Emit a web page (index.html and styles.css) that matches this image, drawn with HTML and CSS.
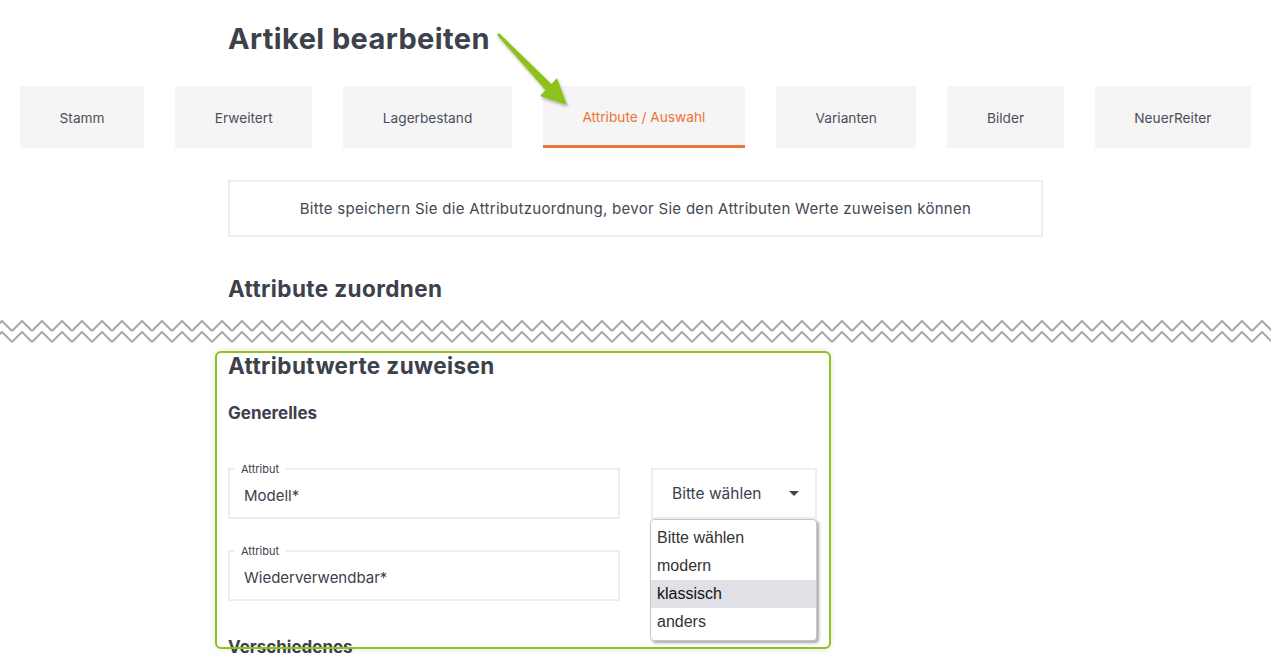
FILE: index.html
```html
<!DOCTYPE html>
<html lang="de">
<head>
  <meta charset="UTF-8" />
  <title>Artikel bearbeiten</title>
  <link rel="stylesheet" href="styles.css">
</head>
<body>
  <h1 class="page-title">Artikel bearbeiten</h1>

  <nav class="tabs">
    <div class="tab">Stamm</div>
    <div class="tab">Erweitert</div>
    <div class="tab">Lagerbestand</div>
    <div class="tab active">Attribute / Auswahl</div>
    <div class="tab">Varianten</div>
    <div class="tab">Bilder</div>
    <div class="tab">NeuerReiter</div>
  </nav>

  <div class="content">
    <div class="notice">Bitte speichern Sie die Attributzuordnung, bevor Sie den Attributen Werte zuweisen können</div>
    <h2 class="section-title">Attribute zuordnen</h2>
  </div>

  <svg class="cut" width="1271" height="26">
    <defs>
      <pattern id="zig" x="-8" y="0" width="20" height="26" patternUnits="userSpaceOnUse">
        <path d="M0 14 L10 4 L20 14 M0 25 L10 15 L20 25" fill="none" stroke="#a9a9a9" stroke-width="2"/>
      </pattern>
    </defs>
    <rect width="1271" height="26" fill="url(#zig)"/>
  </svg>

  <div class="content">
    <h2 class="section-title first">Attributwerte zuweisen</h2>
    <h3 class="group-title">Generelles</h3>

    <div class="attr-row">
      <fieldset class="attr-field">
        <legend>Attribut</legend>
        <div class="attr-value">Modell*</div>
      </fieldset>
      <div class="select-wrap">
        <div class="select-box">Bitte wählen <span class="caret"></span></div>
        <ul class="select-list">
          <li>Bitte wählen</li>
          <li>modern</li>
          <li class="hover">klassisch</li>
          <li>anders</li>
        </ul>
      </div>
    </div>

    <div class="attr-row">
      <fieldset class="attr-field">
        <legend>Attribut</legend>
        <div class="attr-value">Wiederverwendbar*</div>
      </fieldset>
    </div>

    <h3 class="group-title lower">Verschiedenes</h3>
  </div>

  <!-- annotation overlays -->
  <div class="highlight"></div>
  <svg class="pointer" width="90" height="90" viewBox="490 25 90 90">
    <defs>
      <filter id="shadow" x="-20%" y="-20%" width="140%" height="140%">
        <feDropShadow dx="1" dy="2" stdDeviation="1.5" flood-color="#000" flood-opacity="0.3"/>
      </filter>
    </defs>
    <polygon points="497,35 499,33 551.5,84 557,78 567,105 540,96 545.5,90" fill="#8dc21f" filter="url(#shadow)"/>
  </svg>
</body>
</html>
```

FILE: styles.css
```css
body {
  margin: 0;
  font-family: Inter, Lato, sans-serif;
  color: #3c414c;
  background: #fff;
  position: relative;
  height: 657px;
  overflow: hidden;
}
.page-title {
  margin: 22px 0 30px 228px;
  font-size: 29px;
  line-height: 34px;
  font-weight: 700;
  letter-spacing: 0.4px;
  color: #3c414c;
}
.tabs {
  display: flex;
  gap: 31px;
  padding: 0 20px;
}
.tab {
  flex: 1 1 auto;
  height: 62px;
  line-height: 64px;
  padding: 0 36px;
  text-align: center;
  background: #f5f5f5;
  font-size: 13.7px;
  color: #4a4f5b;
  box-sizing: border-box;
}
.tab.active {
  color: #ec7436;
  border-bottom: 3px solid #ec7436;
  line-height: 63px;
}
.content {
  margin-left: 228px;
  width: 815px;
}
.notice {
  margin-top: 32px;
  border: 2px solid #eee;
  padding: 16px;
  line-height: 21px;
  font-size: 15px;
  letter-spacing: 0.3px;
  text-align: center;
  color: #444852;
}
.section-title {
  margin: 37px 0 0;
  font-size: 22.5px;
  line-height: 29px;
  letter-spacing: 0.4px;
  font-weight: 700;
}
.section-title.first {
  margin-top: 8px;
}
.cut {
  display: block;
  margin-top: 14px;
}
.group-title {
  margin: 22px 0 39px;
  font-size: 17px;
  line-height: 22px;
  font-weight: 700;
}
.group-title.lower {
  margin: 35px 0 0;
}
.attr-row {
  display: flex;
  gap: 31px;
  align-items: flex-start;
  margin-bottom: 26px;
}
.attr-field {
  margin: 0;
  width: 392px;
  box-sizing: border-box;
  border: 2px solid #eee;
  padding: 0 14px 3px;
}
.attr-field legend {
  margin-left: -10px;
  padding: 0 7px;
  font-size: 11px;
  line-height: 12px;
  color: #3c414c;
}
.attr-value {
  padding-top: 3px;
  line-height: 36px;
  font-size: 15px;
  color: #3c414c;
}
.select-wrap {
  position: relative;
  margin-top: 5px;
}
.select-box {
  width: 166px;
  height: 51px;
  box-sizing: border-box;
  border: 2px solid #eee;
  padding-left: 19px;
  line-height: 47px;
  font-size: 15.5px;
  color: #3c414c;
  display: flex;
  align-items: center;
  justify-content: space-between;
}
.caret {
  width: 0;
  height: 0;
  margin-right: 16px;
  border-left: 5px solid transparent;
  border-right: 5px solid transparent;
  border-top: 5px solid #444;
}
.select-list {
  position: absolute;
  top: 51px;
  left: -1px;
  width: 167px;
  box-sizing: border-box;
  margin: 0;
  padding: 4px 0;
  list-style: none;
  background: #fff;
  border: 1px solid #c8c8c8;
  border-radius: 4px;
  box-shadow: 2px 2px 3px rgba(0, 0, 0, 0.35);
  font-family: "Liberation Sans", Arial, sans-serif;
  font-size: 16px;
  color: #333;
}
.select-list li {
  height: 28px;
  line-height: 28px;
  padding-left: 6px;
}
.select-list li.hover {
  background: #e1e0e6;
  color: #111;
}
.highlight {
  position: absolute;
  left: 215px;
  top: 351px;
  width: 616px;
  height: 298px;
  box-sizing: border-box;
  border: 2px solid #8dc21f;
  border-radius: 6px;
  box-shadow: 0 0 6px rgba(0, 0, 0, 0.12);
  pointer-events: none;
}
.pointer {
  position: absolute;
  left: 490px;
  top: 25px;
}
```
